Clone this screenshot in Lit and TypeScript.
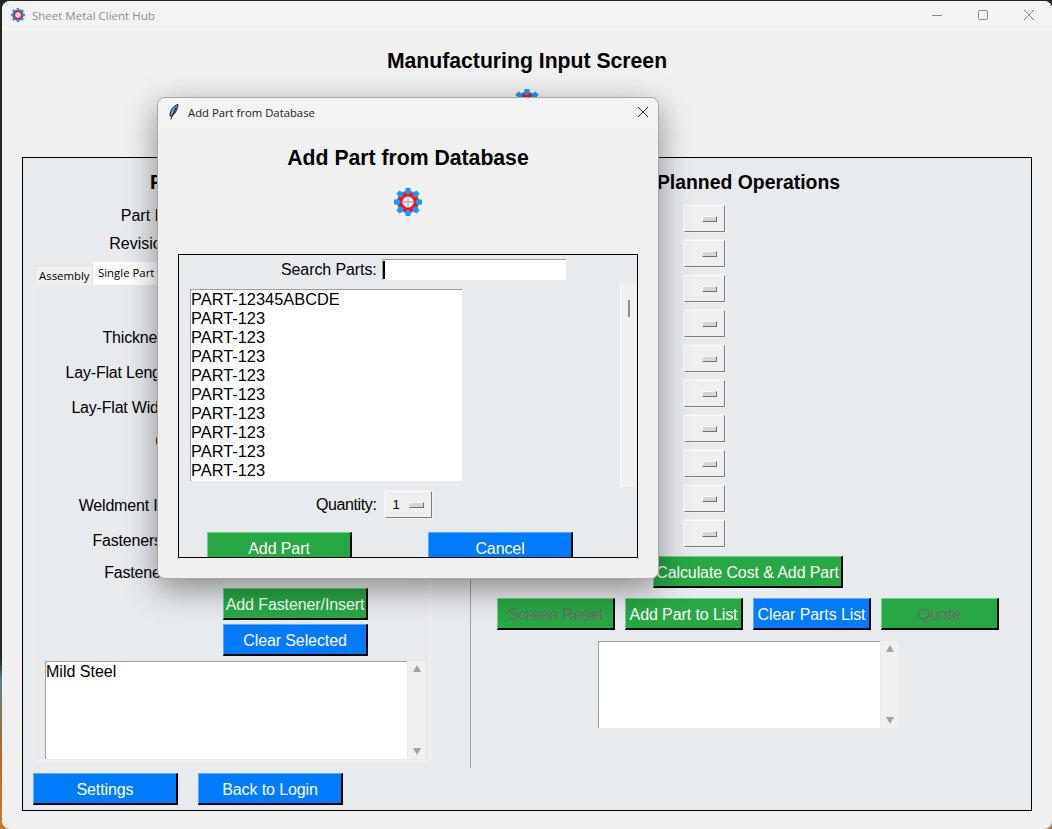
import { LitElement, html, css, svg } from "lit";
import { customElement } from "lit/decorators.js";

// small pixel-ish gear used in the title bar and above the forms
function gear(size: number) {
  const teeth = [];
  for (let i = 0; i < 8; i++) {
    teeth.push(svg`<rect x="12.5" y="0" width="5" height="30" fill="#2196f3" transform="rotate(${i * 45} 15 15)" />`);
  }
  const inner = [];
  for (let i = 0; i < 8; i++) {
    inner.push(svg`<rect x="13.5" y="4.5" width="3" height="21" fill="#ff0f0f" transform="rotate(${i * 45 + 22.5} 15 15)" />`);
  }
  return html`<svg width=${size} height=${size} viewBox="0 0 30 30">
    ${teeth}
    <circle cx="15" cy="15" r="12" fill="#2196f3" />
    ${inner}
    <circle cx="15" cy="15" r="8.5" fill="#ff0f0f" />
    <circle cx="15" cy="15" r="6" fill="#efefef" />
    <path d="M15 9v12M9 15h12" stroke="#b0b0b0" stroke-width="1.4" />
  </svg>`;
}

const feather = html`<svg width="10" height="16" viewBox="0 0 10 16">
  <path d="M9 .5C5 1.5 1.5 5.5 1 11l.6 1.4C5.5 11 8.5 6 9 .5z" fill="#6f9fe0" stroke="#101418" stroke-width="1" />
  <path d="M7 3.5 1.8 15.5" stroke="#101418" stroke-width="1" fill="none" />
</svg>`;

// label, x where the label ends (inside the tab body), row height
const formRows: [string, number, number][] = [
  ["Material:", 181, 35],
  ["Thickness:", 142, 35],
  ["Lay-Flat Length:", 143, 35],
  ["Lay-Flat Width:", 141, 35],
  ["Grade:", 168, 33],
  ["Finish:", 175, 31],
  ["Weldment Inserts:", 169, 34],
  ["Fasteners/Inserts:", 182, 35],
];

@customElement("app-root")
export class AppRoot extends LitElement {
  static styles = css`
    :host {
      display: block;
      position: relative;
      width: 1052px;
      height: 829px;
      overflow: hidden;
      background: linear-gradient(#262626 0 660px, #5f7f88 680px, #b8682c 760px, #c87a38);
      font-family: "Liberation Sans", Arial, sans-serif;
      font-size: 16px;
      color: #000;
    }
    .window {
      position: absolute;
      left: 2px;
      top: 1px;
      width: 1050px;
      height: 828px;
      background: #f0f0f0;
      border-radius: 8px;
      overflow: hidden;
      display: flex;
      flex-direction: column;
    }
    .titlebar {
      flex: none;
      box-sizing: border-box;
      height: 30px;
      padding: 0 0 2px 9px;
      background: #f3f3f3;
      display: flex;
      align-items: center;
      font-family: "Open Sans", "Noto Sans", sans-serif;
      font-size: 11.5px;
      color: #8f8f8f;
    }
    .titlebar .name {
      flex: 1;
      margin-left: 7px;
    }
    .ctl {
      width: 46px;
      height: 28px;
      display: flex;
      align-items: center;
      justify-content: center;
    }
    .heading {
      flex: none;
      height: 126px;
      display: flex;
      flex-direction: column;
      align-items: center;
    }
    h1 {
      margin: 18px 0 0;
      font-size: 21.2px;
      line-height: 24px;
      font-weight: 700;
    }
    .heading .logo {
      margin-top: 16px;
      display: flex;
    }
    .panel {
      margin-left: 20px;
      width: 1010px;
      height: 654px;
      box-sizing: border-box;
      border: 1px solid #000;
      background: #e8ebee;
      display: flex;
    }
    .left {
      width: 448px;
      flex: none;
      box-sizing: border-box;
      border-right: 1px solid #a0a0a0;
      height: 610px;
      padding-left: 10px;
    }
    h2 {
      margin: 0;
      font-size: 19.4px;
      line-height: 22px;
      font-weight: 700;
      white-space: nowrap;
    }
    .left h2 {
      padding-top: 13px;
      margin-bottom: 9px;
      padding-left: 117px;
    }
    .row {
      display: flex;
      align-items: center;
      height: 28px;
    }
    .row label {
      text-align: right;
      white-space: nowrap;
      flex: none;
    }
    .left > .row label {
      width: 142px;
    }
    .tabs {
      display: flex;
      align-items: flex-end;
      height: 23px;
      margin: 4px 0 0 2px;
      font-family: "Open Sans", "Noto Sans", sans-serif;
      font-size: 11.4px;
    }
    .tab {
      box-sizing: border-box;
      width: 58px;
      height: 20px;
      line-height: 19px;
      padding-left: 3px;
      background: #f0f0f0;
      border: 1px solid #e2e2e2;
      border-bottom: none;
    }
    .tab.on {
      width: 70px;
      height: 23px;
      line-height: 22px;
      padding-left: 5px;
      background: #fff;
      border: none;
    }
    .tabbody {
      width: 398px;
      height: 477px;
      box-sizing: border-box;
      border: 2px solid #f0f0f0;
      border-top: none;
      display: flex;
      flex-direction: column;
    }
    .tabbody .row label {
      letter-spacing: -0.2px;
    }
    .combo-under {
      margin-left: 7px;
      width: 184px;
      height: 22px;
      background: #f0f0f0;
      flex: none;
    }
    .stack {
      margin-left: 188px;
      display: flex;
      flex-direction: column;
      gap: 4px;
    }
    .btn {
      box-sizing: border-box;
      height: 32px;
      width: 145px;
      color: #fff;
      font: inherit;
      letter-spacing: -0.1px;
      padding: 2px 0 0;
      text-align: center;
      line-height: 28px;
      border-style: solid;
      border-width: 1px 2px 2px 1px;
      white-space: nowrap;
    }
    .blue {
      background: #007bff;
      border-color: #5aa8ff #000 #000 #5aa8ff;
    }
    .green {
      background: #28a745;
      border-color: #6fcf86 #000 #000 #6fcf86;
    }
    .off {
      color: #6c6a6c;
    }
    .textbox {
      display: flex;
      flex: none;
    }
    .textbox .area {
      box-sizing: border-box;
      background: #fff;
      border-top: 1px solid #a0a0a0;
      border-left: 1px solid #a0a0a0;
      line-height: 19px;
    }
    .sb {
      width: 17px;
      margin-left: 1px;
      background: #f0f0f0;
      display: flex;
      flex-direction: column;
      justify-content: space-between;
      align-items: center;
      padding: 4px 0;
      box-sizing: border-box;
    }
    .up,
    .down {
      width: 0;
      height: 0;
      border-left: 4.5px solid transparent;
      border-right: 4.5px solid transparent;
    }
    .up {
      border-bottom: 7px solid #a3a3a3;
    }
    .down {
      border-top: 7px solid #a3a3a3;
    }
    .tabbody .textbox {
      margin: 5px 0 0 10px;
    }
    .footer {
      display: flex;
      gap: 20px;
      margin-top: 11px;
    }
    .right {
      flex: 1;
      display: flex;
      flex-direction: column;
      align-items: flex-start;
      min-width: 0;
    }
    .right h2 {
      padding: 13px 5px 0 0;
      text-align: center;
      margin: 0 0 12px 0;
      width: 100%;
      box-sizing: border-box;
    }
    .ops {
      margin-left: 213px;
      display: flex;
      flex-direction: column;
      gap: 8px;
    }
    .opt {
      box-sizing: border-box;
      width: 41px;
      height: 27px;
      background: #efefef;
      border: 1px solid;
      border-color: #fafafa #7c7c7c #7c7c7c #fafafa;
      display: flex;
      align-items: center;
      justify-content: flex-end;
      padding-right: 7px;
      outline: 1px solid #f0f2f3;
    }
    .opt i {
      display: block;
      box-sizing: border-box;
      width: 15px;
      height: 6px;
      background: #d6d6d6;
      border: 1px solid;
      border-color: #f8f8f8 #707070 #707070 #f8f8f8;
    }
    .calc {
      width: 190px;
      margin: 9px 0 0 182px;
    }
    .actions {
      display: flex;
      gap: 10px;
      margin: 10px 0 0 26px;
    }
    .actions .btn {
      width: 118px;
    }
    .right .textbox {
      margin: 11px 0 0 127px;
      height: 87px;
    }
    .dialog {
      position: absolute;
      left: 157px;
      top: 97px;
      width: 502px;
      height: 482px;
      background: #f0f0f0;
      border: 1px solid #a8a8a8;
      box-sizing: border-box;
      border-radius: 8px;
      box-shadow: 0 10px 32px rgba(0, 0, 0, 0.42);
      display: flex;
      flex-direction: column;
    }
    .dialog .titlebar {
      color: #1a1a1a;
      border-radius: 8px 8px 0 0;
      padding-left: 11px;
      font-size: 11.3px;
    }
    .dialog .titlebar .name {
      margin-left: 9px;
    }
    .dialog .ctl {
      width: 30px;
    }
    .dialog h1 {
      margin: 18px 0 0;
      text-align: center;
    }
    .dialog .logo {
      display: flex;
      justify-content: center;
      margin-top: 18px;
    }
    .dbox {
      margin: 38px 0 0 20px;
      width: 460px;
      height: 304px;
      box-sizing: border-box;
      border: 1px solid #000;
      background: #e8ebee;
      overflow: hidden;
      display: flex;
      flex-direction: column;
    }
    .search {
      display: flex;
      align-items: center;
      height: 22px;
      margin-top: 3px;
      padding-left: 102px;
      gap: 5px;
      flex: none;
    }
    .search span {
      letter-spacing: -0.1px;
      margin-top: 2px;
    }
    .search .entry {
      box-sizing: border-box;
      width: 184px;
      height: 21px;
      background: #fff;
      border-top: 1px solid #a0a0a0;
      border-left: 1px solid #a0a0a0;
      padding-top: 1px;
    }
    .search .caret {
      display: block;
      width: 2px;
      height: 18px;
      background: #000;
    }
    .listrow {
      display: flex;
      flex: none;
      height: 203px;
      margin-top: 8px;
      padding-left: 11px;
    }
    .list {
      box-sizing: border-box;
      width: 272px;
      height: 192px;
      margin-top: 1px;
      background: #fff;
      border-top: 1px solid #a0a0a0;
      border-left: 1px solid #a0a0a0;
      font-size: 16.4px;
      line-height: 19px;
      overflow: hidden;
    }
    .vbar {
      margin-left: 158px;
      margin-top: -5px;
      width: 17px;
      height: 204px;
      background: #f0f0f0;
      border-left: 1px solid #fafafa;
      box-sizing: border-box;
      padding: 17px 0 0 7px;
    }
    .vbar i {
      display: block;
      width: 2px;
      height: 17px;
      background: #8e8e8e;
    }
    .qty {
      display: flex;
      align-items: center;
      gap: 9px;
      height: 27px;
      flex: none;
      padding-left: 137px;
      letter-spacing: -0.4px;
    }
    .qty .opt {
      width: 47px;
      justify-content: space-between;
      padding: 0 7px 0 6px;
      font-size: 13px;
    }
    .dactions {
      display: flex;
      gap: 76px;
      margin: 14px 0 0 28px;
    }
  `;

  private ops() {
    return Array.from({ length: 10 }, () => html`<div class="opt"><i></i></div>`);
  }

  render() {
    return html`
      <div class="window">
        <div class="titlebar">
          ${gear(14)}
          <span class="name">Sheet Metal Client Hub</span>
          <span class="ctl"><svg width="12" height="12"><path d="M1 6.5h10" stroke="#8a8a8a" /></svg></span>
          <span class="ctl"><svg width="12" height="12"><rect x="1.5" y="1.5" width="9" height="9" rx="1" fill="none" stroke="#8a8a8a" /></svg></span>
          <span class="ctl"><svg width="12" height="12"><path d="M1 1l10 10M11 1 1 11" stroke="#8a8a8a" /></svg></span>
        </div>
        <div class="heading">
          <h1>Manufacturing Input Screen</h1>
          <div class="logo">${gear(28)}</div>
        </div>
        <div class="panel">
          <div class="left">
            <h2>Part Information</h2>
            <div class="row"><label>Part ID:</label></div>
            <div class="row"><label>Revision:</label></div>
            <div class="tabs">
              <span class="tab">Assembly</span>
              <span class="tab on">Single Part</span>
            </div>
            <div class="tabbody">
              ${formRows.map(
                ([l, w, h]) => html`<div class="row" style="height:${h}px"><label style="width:${w}px">${l}</label></div>`
              )}
              <div class="row" style="height:30px">
                <label style="width:181px">Fastener Count:</label>
                <div class="combo-under"></div>
              </div>
              <div class="stack">
                <button class="btn green">Add Fastener/Insert</button>
                <button class="btn blue">Clear Selected</button>
              </div>
              <div class="textbox">
                <div class="area" style="width:362px;height:98px">Mild Steel</div>
                <div class="sb" style="height:98px"><span class="up"></span><span class="down"></span></div>
              </div>
            </div>
            <div class="footer">
              <button class="btn blue">Settings</button>
              <button class="btn blue">Back to Login</button>
            </div>
          </div>
          <div class="right">
            <h2>Planned Operations</h2>
            <div class="ops">${this.ops()}</div>
            <button class="btn green calc">Calculate Cost &amp; Add Part</button>
            <div class="actions">
              <button class="btn green off">Screen Reset</button>
              <button class="btn green">Add Part to List</button>
              <button class="btn blue">Clear Parts List</button>
              <button class="btn green off">Quote</button>
            </div>
            <div class="textbox">
              <div class="area" style="width:282px;height:87px"></div>
              <div class="sb" style="height:87px"><span class="up"></span><span class="down"></span></div>
            </div>
          </div>
        </div>
      </div>

      <div class="dialog">
        <div class="titlebar">
          ${feather}
          <span class="name">Add Part from Database</span>
          <span class="ctl"><svg width="12" height="12"><path d="M1 1l10 10M11 1 1 11" stroke="#222" /></svg></span>
        </div>
        <h1>Add Part from Database</h1>
        <div class="logo">${gear(28)}</div>
        <div class="dbox">
          <div class="search">
            <span>Search Parts:</span>
            <div class="entry"><i class="caret"></i></div>
          </div>
          <div class="listrow">
            <div class="list">
              <div>PART-12345ABCDE</div>
              ${Array.from({ length: 9 }, () => html`<div>PART-123</div>`)}
            </div>
            <div class="vbar"><i></i></div>
          </div>
          <div class="qty">
            <span>Quantity:</span>
            <div class="opt"><span>1</span><i></i></div>
          </div>
          <div class="dactions">
            <button class="btn green">Add Part</button>
            <button class="btn blue">Cancel</button>
          </div>
        </div>
      </div>
    `;
  }
}
